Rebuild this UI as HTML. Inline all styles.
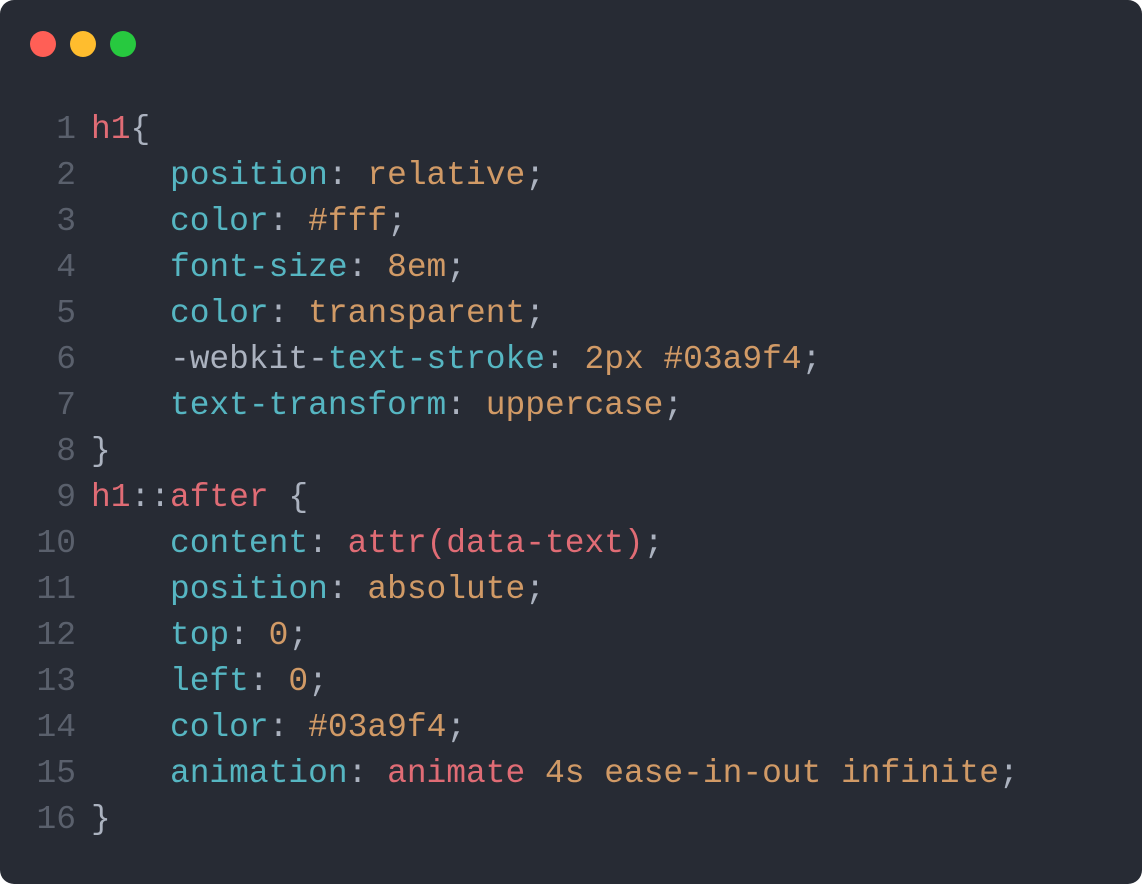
<!DOCTYPE html>
<html><head><meta charset="utf-8"><style>
html,body{margin:0;padding:0;background:#fff;width:1142px;height:884px;overflow:hidden}
.win{position:absolute;left:0;top:0;width:1142px;height:884px;background:#272b34;border-radius:14px}
.d{position:absolute;top:31px;width:26px;height:26px;border-radius:50%}
.code{position:absolute;left:0;top:107px;width:1142px;font-family:"Liberation Mono",monospace;font-size:32.9px;line-height:46px;color:#abb2bf}
.l{height:46px;position:relative}
.n{position:absolute;left:0;width:76px;text-align:right;color:#5a606c}
.c{position:absolute;left:91px;white-space:pre}
.r{color:#e06c75}.b{color:#56b6c2}.o{color:#d19a66}
</style></head><body>
<div class="win">
<div class="d" style="left:30px;background:#ff5f56"></div>
<div class="d" style="left:70px;background:#ffbd2e"></div>
<div class="d" style="left:110px;background:#27c93f"></div>
<div class="code"><div class="l"><span class="n">1</span><span class="c"><span class="r">h1</span>{</span></div><div class="l"><span class="n">2</span><span class="c">    <span class="b">position</span>: <span class="o">relative</span>;</span></div><div class="l"><span class="n">3</span><span class="c">    <span class="b">color</span>: <span class="o">#fff</span>;</span></div><div class="l"><span class="n">4</span><span class="c">    <span class="b">font-size</span>: <span class="o">8em</span>;</span></div><div class="l"><span class="n">5</span><span class="c">    <span class="b">color</span>: <span class="o">transparent</span>;</span></div><div class="l"><span class="n">6</span><span class="c">    -webkit-<span class="b">text-stroke</span>: <span class="o">2px #03a9f4</span>;</span></div><div class="l"><span class="n">7</span><span class="c">    <span class="b">text-transform</span>: <span class="o">uppercase</span>;</span></div><div class="l"><span class="n">8</span><span class="c">}</span></div><div class="l"><span class="n">9</span><span class="c"><span class="r">h1</span>::<span class="r">after</span> {</span></div><div class="l"><span class="n">10</span><span class="c">    <span class="b">content</span>: <span class="r">attr(data-text)</span>;</span></div><div class="l"><span class="n">11</span><span class="c">    <span class="b">position</span>: <span class="o">absolute</span>;</span></div><div class="l"><span class="n">12</span><span class="c">    <span class="b">top</span>: <span class="o">0</span>;</span></div><div class="l"><span class="n">13</span><span class="c">    <span class="b">left</span>: <span class="o">0</span>;</span></div><div class="l"><span class="n">14</span><span class="c">    <span class="b">color</span>: <span class="o">#03a9f4</span>;</span></div><div class="l"><span class="n">15</span><span class="c">    <span class="b">animation</span>: <span class="r">animate</span> <span class="o">4s ease-in-out infinite</span>;</span></div><div class="l"><span class="n">16</span><span class="c">}</span></div></div>
</div>
</body></html>
